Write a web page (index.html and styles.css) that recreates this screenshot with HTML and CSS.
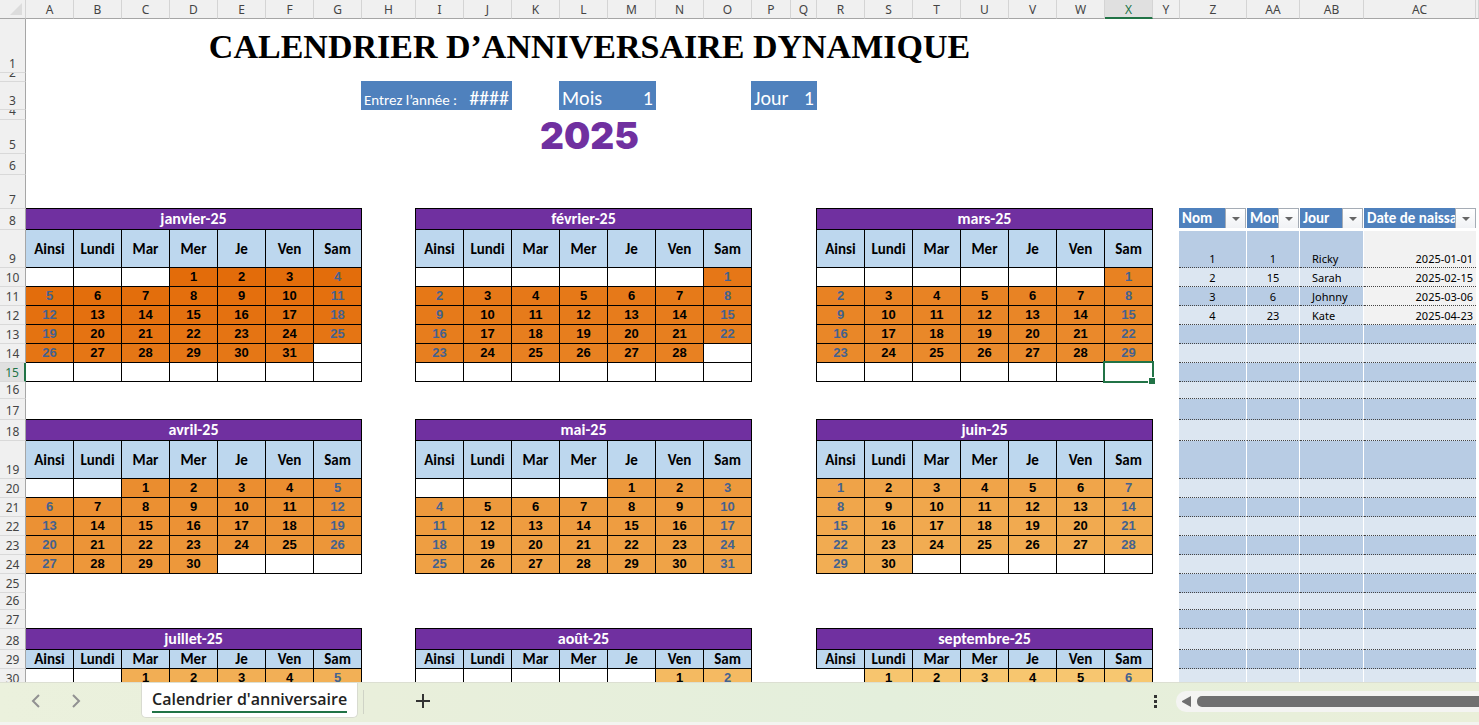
FILE: index.html
```html
<!DOCTYPE html>
<html lang="fr">
<head>
    <meta charset="UTF-8">
    <meta name="viewport" content="width=device-width, initial-scale=1.0">
    <title>Calendrier d'anniversaire</title>
    <link rel="stylesheet" href="styles.css">
</head>

<body>
    <main class="sheet" id="sheet">
        <div class="corner">
            <svg width="12" height="12" viewBox="0 0 12 12"><path d="M12 0V12H0Z" fill="#dcdcdc"/></svg>
        </div>

        <h1 class="title">CALENDRIER D’ANNIVERSAIRE DYNAMIQUE</h1>

        <div class="field field-year">
            <label for="year">Entrez l’année :</label>
            <input type="text" id="year" value="####">
        </div>
        <div class="field field-month">
            <label for="month">Mois</label>
            <input type="text" id="month" value="1">
        </div>
        <div class="field field-day">
            <label for="day">Jour</label>
            <input type="text" id="day" value="1">
        </div>

        <h2 class="year">2025</h2>

        <table class="people">
            <colgroup>
                <col class="col-name">
                <col class="col-month">
                <col class="col-day">
                <col class="col-date">
            </colgroup>
            <thead>
                <tr>
                    <th>Nom<button class="filter" aria-label="Filtrer Nom"><span></span></button></th>
                    <th>Mon<button class="filter" aria-label="Filtrer Mon"><span></span></button></th>
                    <th>Jour<button class="filter" aria-label="Filtrer Jour"><span></span></button></th>
                    <th>Date de naissance<button class="filter" aria-label="Filtrer Date"><span></span></button></th>
                </tr>
            </thead>
            <tbody id="people"></tbody>
        </table>
    </main>

    <footer class="tabbar">
        <nav class="arrows">
            <button aria-label="Feuille précédente"><svg width="10" height="14" viewBox="0 0 10 14"><path d="M8 1L2 7L8 13"/></svg></button>
            <button aria-label="Feuille suivante"><svg width="10" height="14" viewBox="0 0 10 14"><path d="M2 1L8 7L2 13"/></svg></button>
        </nav>
        <a class="tab" href="#sheet"><span>Calendrier d'anniversaire</span></a>
        <button class="add" aria-label="Nouvelle feuille"><svg width="14" height="14" viewBox="0 0 14 14"><path d="M7 0V14M0 7H14"/></svg></button>
        <button class="more" aria-label="Options"><svg width="4" height="14" viewBox="0 0 4 14"><path d="M0 0H3V3H0ZM0 5H3V8H0ZM0 10H3V13H0Z"/></svg></button>
        <div class="scroll">
            <svg width="10" height="11" viewBox="0 0 10 11"><path d="M9 0V11L0 6V5Z"/></svg>
            <div class="thumb"></div>
        </div>
    </footer>

    <script src="script.js"></script>
</body>
</html>
```

FILE: styles.css
```css
* {
    box-sizing: border-box;
}

body {
    margin: 0;
    height: 100vh;
    display: flex;
    flex-direction: column;
    overflow: hidden;
    background: #fff;
    font-family: "Noto Sans", sans-serif;
}

button {
    padding: 0;
    border: none;
    background: none;
    cursor: pointer;
}

/* Spreadsheet grid: row numbers, then columns A to AC */
.sheet {
    flex: 1;
    min-height: 0;
    overflow: hidden;
    display: grid;
    grid-template-columns: 26px repeat(7, 48px) 54px repeat(7, 48px) 39px 26px repeat(7, 48px) 27px 67px 53px 64px 112px 1fr;
    grid-template-rows: 19px 54px 9px 28px 10px 34px 21px 34px
        21px 38px repeat(6, 19px) 17px 21px
        21px 38px repeat(5, 19px) 19px 17px 19px
        21px repeat(2, 19px);
}

.corner {
    grid-area: 1 / 1;
    display: flex;
    justify-content: flex-end;
    align-items: flex-end;
    padding: 3px;
    background: #f0f0f0;
    border-right: 1px solid #d4d4d4;
    border-bottom: 1px solid #a6a6a6;
}

.col-head, .row-head {
    background: #f0f0f0;
    color: #444;
    font-size: 12px;
    text-align: center;
    overflow: hidden;
}
.col-head {
    grid-row: 1;
    line-height: 20px;
    border-right: 1px solid #d4d4d4;
    border-bottom: 1px solid #a6a6a6;
}
.row-head {
    grid-column: 1;
    position: relative;
    z-index: 1;
    display: flex;
    align-items: flex-end;
    justify-content: center;
    line-height: 17px;
    border-right: 1px solid #a6a6a6;
    border-bottom: 1px solid #d9d9d9;
}
.col-head.active {
    background: #e0e0e0;
    color: #217346;
    border-bottom: 2px solid #217346;
}
.row-head.active {
    background: #e0e0e0;
    color: #217346;
    border-right: 2px solid #217346;
}

.title {
    grid-area: 2 / 2 / 3 / 26;
    margin: 0;
    font-family: Algerian, "Liberation Serif", serif;
    font-size: 34px;
    line-height: 56px;
    font-weight: bold;
    text-align: center;
    white-space: nowrap;
}

.year {
    grid-area: 6 / 2 / 7 / 26;
    margin: 0;
    color: #7030a0;
    font-family: "Arial Black", Inter, sans-serif;
    font-size: 37px;
    font-weight: 900;
    line-height: 32px;
    text-align: center;
}

/* Blue input cells */
.field {
    margin: -1px 0 0 -1px;
    padding: 0 3px;
    display: flex;
    align-items: baseline;
    background: #4f81bd;
    color: #fff;
    font-family: Calibri, Carlito, Lato, sans-serif;
    font-size: 20px;
    line-height: 34px;
}
.field label {
    white-space: nowrap;
}
.field input {
    flex: 1;
    min-width: 0;
    padding: 0;
    border: none;
    background: none;
    color: #fff;
    font: inherit;
    text-align: right;
}
.field-year {
    grid-area: 4 / 9 / 5 / 12;
}
.field-year label {
    font-size: 15px;
}
.field-month {
    grid-area: 4 / 13 / 5 / 15;
}
.field-day {
    grid-area: 4 / 17 / 5 / 19;
}

/* Tables start on the gridline before their first cell */
.month, .people {
    margin: -1px 0 0 -1px;
    align-self: start;
    table-layout: fixed;
    border-collapse: separate;
    border-spacing: 0;
}
.month {
    width: 337px;
}
.month th, .month td {
    height: 19px;
    padding: 0;
    border-right: 1px solid #000;
    border-bottom: 1px solid #000;
    text-align: center;
    font-weight: bold;
}
.month th:first-child, .month td:first-child {
    border-left: 1px solid #000;
}
.month .name {
    height: 22px;
    background: #7030a0;
    border-top: 1px solid #000;
    color: #fff;
    font-family: Calibri, Carlito, Lato, sans-serif;
    font-size: 16px;
    line-height: 20px;
}
.month .days th {
    height: 38px;
    background: #bdd7ee;
    font-family: Calibri, Carlito, Lato, sans-serif;
    font-size: 15px;
    line-height: 18px;
}
.month.compact .days th {
    height: 19px;
}
.month td {
    font-family: "Liberation Sans", Arial, sans-serif;
    font-size: 13px;
    line-height: 18px;
}
.month .weekend {
    color: #44628f;
}
.month td.open {
    border-left-color: transparent;
}
.month .col-first { width: 49px; }
.month .col-weekday { width: 48px; }

.month .selected {
    position: relative;
}
.selected::before {
    content: "";
    position: absolute;
    inset: -2px;
    border: 2px solid #217346;
}
.selected::after {
    content: "";
    position: absolute;
    right: -3px;
    bottom: -3px;
    width: 6px;
    height: 6px;
    background: #217346;
    border: 1px solid #fff;
    border-width: 1px 0 0 1px;
}

/* Birthday list */
.people {
    grid-area: 9 / 27 / -1 / 31;
    width: 297px;
    font-size: 11px;
}
.col-name { width: 68px; }
.col-month { width: 53px; }
.col-day { width: 64px; }
.col-date { width: 112px; }

.people th {
    position: relative;
    height: 23px;
    padding: 0 0 0 3px;
    background: #4f81bd;
    border-right: 1px solid #fff;
    border-bottom: 3px solid #fff;
    color: #fff;
    font-family: Calibri, Carlito, Lato, sans-serif;
    font-size: 15px;
    line-height: 20px;
    text-align: left;
    white-space: nowrap;
    overflow: hidden;
}
.people th:last-child, .people td:last-child {
    border-right: none;
}
.people td {
    height: 19px;
    padding: 0;
    background: #dce6f1;
    border-right: 1px solid #fff;
    border-bottom: 1px dotted #444;
    line-height: 17px;
    text-align: center;
    vertical-align: bottom;
}
.people tr:nth-child(odd) td {
    background: #b8cce4;
}
.people td:nth-child(3) {
    padding-left: 12px;
    text-align: left;
}
.people td:nth-child(4) {
    padding-right: 3px;
    text-align: right;
}
.people tr td.date {
    background: #f2f2f2;
}
.people .first td { height: 37px; }
.people .short td { height: 17px; }
.people .title-row td { height: 21px; }
.people .tall td { height: 38px; }

.filter {
    position: absolute;
    top: 0;
    right: 0;
    width: 21px;
    height: 21px;
    display: flex;
    align-items: center;
    justify-content: center;
    background: linear-gradient(#fff, #f0f2f5);
    border: 1px solid #a5acb5;
}
.filter span {
    border: 4px solid transparent;
    border-top-color: #666;
    border-bottom: none;
}

/* Sheet tabs and scroll bar */
.tabbar {
    height: 43px;
    flex-shrink: 0;
    display: flex;
    align-items: flex-start;
    background: linear-gradient(90deg, #ebf1dd, #e9efdb 25%, #e4efdc 60%, #e6efdb 75%, #eaefd9);
    border-top: 1px solid #dcdfd2;
    border-bottom: 3px solid #f3f4f0;
}
.arrows {
    width: 141px;
    padding: 11px 0 0 31px;
    display: flex;
    gap: 30px;
}
.arrows svg, .add svg {
    fill: none;
    stroke: #919191;
    stroke-width: 2;
}
.tab {
    height: 35px;
    padding: 4px 10px 0;
    background: #fff;
    border: 1px solid #d8dbd0;
    border-top: none;
    border-radius: 0 0 5px 5px;
    color: #222;
    font-family: "Segoe UI", "Open Sans", sans-serif;
    font-size: 16px;
    font-weight: 600;
    line-height: 24px;
    text-decoration: none;
    white-space: nowrap;
}
.tab span {
    display: block;
    border-bottom: 2px solid #217346;
}
.add {
    margin: 7px 0 0 5px;
    padding-left: 52px;
    height: 24px;
    border-left: 1px solid #cfd3c6;
}
.add svg {
    stroke: #333;
}
.more {
    margin: 12px 18px 0 auto;
}
.more svg {
    fill: #333;
}
.scroll {
    width: 303px;
    height: 21px;
    margin-top: 8px;
    padding-left: 6px;
    display: flex;
    align-items: center;
    gap: 5px;
    background: #f4f4f2;
    border-radius: 10px 0 0 10px;
}
.scroll svg {
    fill: #6f6f6f;
}
.thumb {
    flex: 1;
    height: 11px;
    background: #707070;
    border-radius: 5px 0 0 5px;
}
```

FILE: script.js
```javascript
const YEAR = 2025;
const DAYS = ['Ainsi', 'Lundi', 'Mar', 'Mer', 'Je', 'Ven', 'Sam'];
const MONTHS = ['janvier', 'février', 'mars', 'avril', 'mai', 'juin', 'juillet', 'août', 'septembre'];
const LAST_ROW = 30;

// Each band of three months: first grid line, week rows in the frame and weeks filled in
const BANDS = [
    { row: 9, weeks: 6, filled: 5 },
    { row: 19, weeks: 5, filled: 5 },
    { row: 29, weeks: 1, filled: 1, compact: true }
];
const MONTH_COLUMNS = [2, 10, 19];

const PEOPLE = [
    ['1', '1', 'Ricky', '2025-01-01'],
    ['2', '15', 'Sarah', '2025-02-15'],
    ['3', '6', 'Johnny', '2025-03-06'],
    ['4', '23', 'Kate', '2025-04-23']
];

const sheet = document.getElementById('sheet');

// Column letters A to AC, then an empty header for the rest of the width
function addColumnHeads() {
    for (let i = 0; i < 30; i++) {
        const head = document.createElement('div');
        head.className = 'col-head';
        if (i < 26) head.textContent = String.fromCharCode(65 + i);
        else if (i < 29) head.textContent = 'A' + String.fromCharCode(65 + i - 26);
        if (i === 23) head.classList.add('active');
        head.style.gridColumn = i + 2;
        sheet.appendChild(head);
    }
}

function addRowHeads() {
    for (let i = 1; i <= LAST_ROW; i++) {
        const head = document.createElement('div');
        head.className = i === 15 ? 'row-head active' : 'row-head';
        head.textContent = i;
        head.style.gridRow = i + 1;
        sheet.appendChild(head);
    }
}

// Color scale that runs over the days of the year
function dayColor(date) {
    const t = (date - new Date(YEAR, 0, 1)) / 86400000 / 243;
    const from = [227, 108, 10];
    const to = [247, 197, 110];
    return 'rgb(' + from.map((c, i) => Math.round(c + (to[i] - c) * t)).join(',') + ')';
}

function emptyCell(month, week, d) {
    if (month === 2 && week === 5 && d === 6) return '<td class="selected"></td>';
    if (month === 8 && d === 0) return '<td class="open"></td>';
    return '<td></td>';
}

function addMonth(month) {
    const band = BANDS[Math.floor(month / 3)];
    const column = MONTH_COLUMNS[month % 3];
    const offset = new Date(YEAR, month, 1).getDay();
    const length = new Date(YEAR, month + 1, 0).getDate();

    let html = '<colgroup><col class="col-first">' + '<col class="col-weekday">'.repeat(6) + '</colgroup>';
    html += `<thead><tr><th class="name" colspan="7">${MONTHS[month]}-25</th></tr>`;
    html += '<tr class="days">' + DAYS.map(d => `<th>${d}</th>`).join('') + '</tr></thead><tbody>';
    for (let week = 0; week < band.weeks; week++) {
        html += '<tr>';
        for (let d = 0; d < 7; d++) {
            const day = week * 7 + d - offset + 1;
            if (week < band.filled && day >= 1 && day <= length) {
                const weekend = d === 0 || d === 6 ? 'weekend' : '';
                html += `<td class="${weekend}" style="background:${dayColor(new Date(YEAR, month, day))}">${day}</td>`;
            } else {
                html += emptyCell(month, week, d);
            }
        }
        html += '</tr>';
    }

    const table = document.createElement('table');
    table.className = band.compact ? 'month compact' : 'month';
    table.style.gridArea = `${band.row} / ${column} / span ${band.weeks + 2} / span 7`;
    table.innerHTML = html + '</tbody>';
    sheet.appendChild(table);
}

// The list follows the row heights of the sheet from row 9 down
function addPeople() {
    const rowClass = { 9: 'first', 16: 'short', 17: 'title-row', 18: 'title-row', 19: 'tall', 26: 'short', 28: 'title-row' };
    let html = '';
    for (let row = 9; row <= LAST_ROW; row++) {
        const person = PEOPLE[row - 9];
        html += `<tr class="${rowClass[row] || ''}">`;
        for (let i = 0; i < 4; i++) {
            html += `<td${person && i === 3 ? ' class="date"' : ''}>${person ? person[i] : ''}</td>`;
        }
        html += '</tr>';
    }
    document.getElementById('people').innerHTML = html;
}

addColumnHeads();
addRowHeads();
MONTHS.forEach((name, month) => addMonth(month));
addPeople();
```
